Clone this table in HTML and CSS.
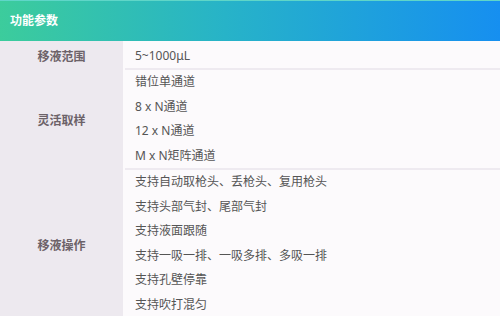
FILE: index.html
```html
<!DOCTYPE html>
<html lang="zh-CN">
<head>
<meta charset="utf-8">
<meta name="viewport" content="width=device-width, initial-scale=1">
<title>功能参数</title>
<link rel="stylesheet" href="styles.css">
</head>
<body>
<div class="spec">

  <div class="spec-head">功能参数</div>

  <div class="spec-row first">
    <div class="spec-label">移液范围</div>
    <div class="spec-values">
      <div class="spec-item">5~1000μL</div>
    </div>
  </div>

  <div class="spec-row">
    <div class="spec-label">灵活取样</div>
    <div class="spec-values">
      <div class="spec-item">错位单通道</div>
      <div class="spec-item">8 x N通道</div>
      <div class="spec-item">12 x N通道</div>
      <div class="spec-item">M x N矩阵通道</div>
    </div>
  </div>

  <div class="spec-row">
    <div class="spec-label">移液操作</div>
    <div class="spec-values">
      <div class="spec-item">支持自动取枪头、丢枪头、复用枪头</div>
      <div class="spec-item">支持头部气封、尾部气封</div>
      <div class="spec-item">支持液面跟随</div>
      <div class="spec-item">支持一吸一排、一吸多排、多吸一排</div>
      <div class="spec-item">支持孔壁停靠</div>
      <div class="spec-item">支持吹打混匀</div>
    </div>
  </div>

</div>
</body>
</html>
```

FILE: styles.css
```css
body {
  margin: 0;
  background: #fcfafc;
  font-family: "Noto Sans", "Noto Sans CJK SC", sans-serif;
  font-size: 12px;
  color: #555;
}
.spec {
  width: 500px;
  height: 316px;
  overflow: hidden;
}
.spec-head {
  height: 40px;
  line-height: 40px;
  padding-left: 10px;
  border-top: 1px solid #5fd6c8;
  background: linear-gradient(90deg, #3ccc9c 0%, #27b3c8 45%, #168ff0 100%);
  color: #fff;
  font-weight: bold;
}
.spec-row {
  display: flex;
  gap: 2px;
}
.spec-label {
  width: 123px;
  flex-shrink: 0;
  display: flex;
  align-items: center;
  justify-content: center;
  background: #ede9ef;
  color: #6c6268;
  font-weight: bold;
}
.spec-values {
  flex: 1;
  padding-left: 10px;
  border-bottom: 2px solid #eeeaf0;
}
.spec-item {
  height: 24.5px;
  line-height: 24.5px;
}
.first .spec-item {
  height: 27px;
  line-height: 29px;
}
```
